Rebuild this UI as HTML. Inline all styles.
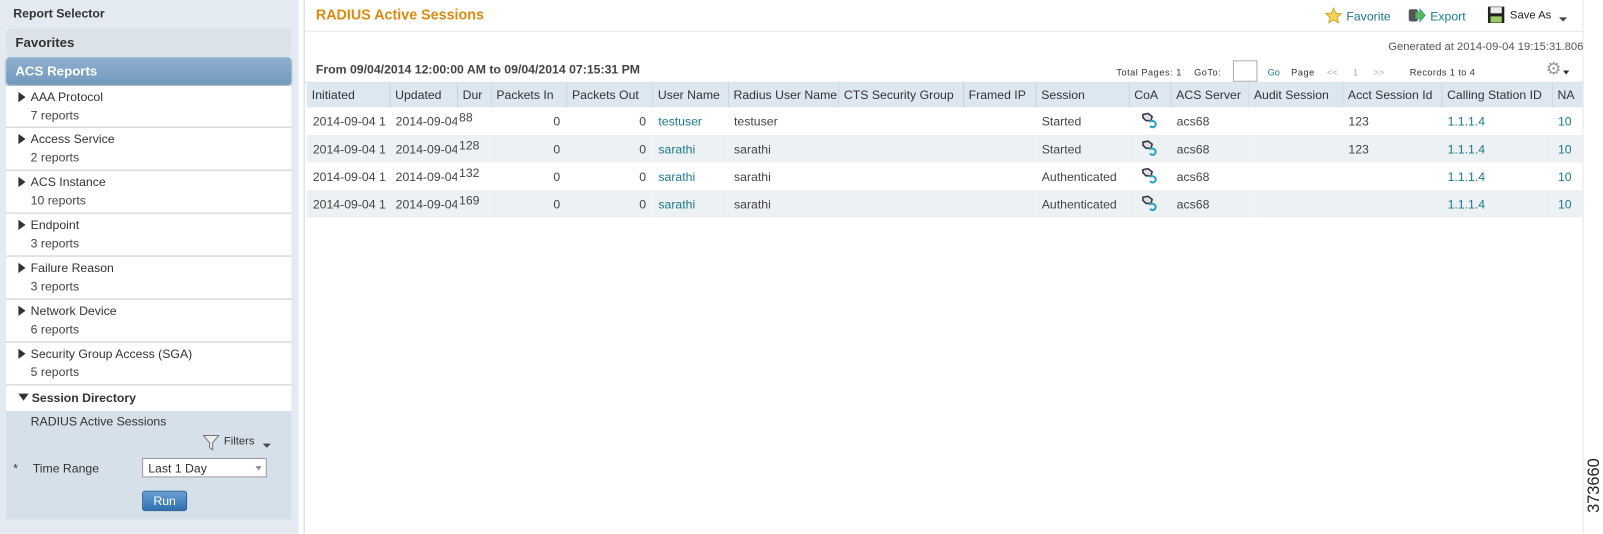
<!DOCTYPE html>
<html><head><meta charset="utf-8"><style>
*{margin:0;padding:0;box-sizing:border-box}
body{width:1603px;height:522px;background:#fff;font-family:"Liberation Sans",sans-serif;font-size:12px;color:#333;position:relative;overflow:hidden}
#wrap{position:absolute;left:0;top:0;width:1568px;height:511px;transform:scale(1.0223);transform-origin:0 0}
.a{position:absolute;white-space:nowrap}
#left{position:absolute;left:0;top:0;width:292px;height:522px;background:#e3eaf1}
.item{position:absolute;left:6px;width:279px;height:42px;background:#fff;border-bottom:1px solid #c8c8c8}
.item .t{position:absolute;left:12px;top:4px;font-size:12px;color:#333}
.item .s{position:absolute;left:24px;top:22px;font-size:12px;color:#444}
.tri{display:inline-block;width:0;height:0;border-left:7px solid #333;border-top:5px solid transparent;border-bottom:5px solid transparent;margin-right:5px;vertical-align:-1px}
table{border-collapse:collapse;position:absolute;left:300px;top:81px;width:1248px;table-layout:fixed}
th{background:#dde7f1;font-weight:normal;text-align:left;height:24px;padding:0 5px;border-right:1px solid #c5d2de;font-size:12px;color:#333;overflow:hidden;white-space:nowrap}
td{height:27px;padding:0 6px;font-size:12px;color:#444;overflow:hidden;white-space:nowrap}
td.u{padding:0 0 0 6px;text-overflow:clip}
tr.g td{background:#eef1f4}
.l{color:#1a7a8a}
.r{text-align:right}
</style></head><body><div id="wrap">
<div id="left">
 <div class="a" style="left:13px;top:6px;font-size:12px;font-weight:bold;color:#333">Report Selector</div>
 <div class="a" style="left:6px;top:28px;width:279px;height:27px;background:#dbe2e8;border-radius:4px"></div>
 <div class="a" style="left:15px;top:34px;font-size:13px;font-weight:bold;color:#333">Favorites</div>
 <div class="a" style="left:6px;top:56px;width:279px;height:27px;background:linear-gradient(#8fb0cf,#7199bd);border-radius:4px;box-shadow:0 1px 2px #89a"></div>
 <div class="a" style="left:15px;top:62px;font-size:13px;font-weight:bold;color:#fff">ACS Reports</div>
 <div class="item" style="top:84px;height:41px"><div class="t"><span class="tri"></span>AAA Protocol</div><div class="s">7 reports</div></div>
 <div class="item" style="top:125px"><div class="t"><span class="tri"></span>Access Service</div><div class="s">2 reports</div></div>
 <div class="item" style="top:167px"><div class="t"><span class="tri"></span>ACS Instance</div><div class="s">10 reports</div></div>
 <div class="item" style="top:209px"><div class="t"><span class="tri"></span>Endpoint</div><div class="s">3 reports</div></div>
 <div class="item" style="top:251px"><div class="t"><span class="tri"></span>Failure Reason</div><div class="s">3 reports</div></div>
 <div class="item" style="top:293px"><div class="t"><span class="tri"></span>Network Device</div><div class="s">6 reports</div></div>
 <div class="item" style="top:335px"><div class="t"><span class="tri"></span>Security Group Access (SGA)</div><div class="s">5 reports</div></div>
 <div class="a" style="left:6px;top:377px;width:279px;height:25px;background:#fff"></div>
 <div class="a" style="left:18px;top:382px;font-weight:bold;color:#333"><span style="display:inline-block;border-top:7px solid #333;border-left:5px solid transparent;border-right:5px solid transparent;margin-right:3px;vertical-align:1px"></span>Session Directory</div>
 <div class="a" style="left:6px;top:402px;width:279px;height:106px;background:#d6e0ea"></div>
 <div class="a" style="left:30px;top:405px;color:#333">RADIUS Active Sessions</div>
 <svg class="a" style="left:198px;top:424px" width="18" height="18" viewBox="0 0 18 18"><path d="M1 2h15l-6 7v7l-3-2V9z" fill="#eee" stroke="#777"/></svg>
 <div class="a" style="left:219px;top:426px;font-size:11px;color:#333">Filters</div>
 <div class="a" style="left:257px;top:434px;border-top:4px solid #444;border-left:4px solid transparent;border-right:4px solid transparent"></div>
 <div class="a" style="left:13px;top:451px;color:#333">*</div>
 <div class="a" style="left:32px;top:451px;color:#333">Time Range</div>
 <div class="a" style="left:139px;top:448px;width:122px;height:19px;background:#fff;border:1px solid #999;padding:2px 5px;color:#333">Last 1 Day</div>
 <div class="a" style="left:250px;top:456px;border-top:4px solid #888;border-left:3px solid transparent;border-right:3px solid transparent"></div>
 <div class="a" style="left:139px;top:480px;width:44px;height:20px;background:linear-gradient(#6aa0d4,#2f6fae);border:1px solid #2a5f95;border-radius:3px;color:#fff;text-align:center;line-height:18px">Run</div>
</div>
<div class="a" style="left:297px;top:0;width:1px;height:522px;background:#d0d6dc"></div>
<div class="a" style="left:1548px;top:0;width:1px;height:522px;background:#e6e6e6"></div>
<div class="a" style="left:309px;top:6px;font-size:14px;font-weight:bold;color:#d98a12">RADIUS Active Sessions</div>
<div class="a" style="left:298px;top:30px;width:1250px;height:1px;background:#e4e4e4"></div>
<svg class="a" style="left:1296px;top:7px" width="17" height="17" viewBox="0 0 20 20"><path d="M10 1l2.6 6 6.4.5-5 4.2 1.6 6.3L10 14.6 4.4 18l1.6-6.3-5-4.2 6.4-.5z" fill="#f5d65a" stroke="#c9a01e"/></svg>
<div class="a l" style="left:1317px;top:9px;color:#1a7a8a">Favorite</div>
<svg class="a" style="left:1377px;top:7px" width="18" height="16" viewBox="0 0 18 16"><rect x="1" y="2" width="9" height="12" rx="2" fill="#555"/><path d="M8 5h4V2l5 6-5 6v-3H8z" fill="#5cb85c" stroke="#3a7"/></svg>
<div class="a l" style="left:1399px;top:9px;color:#1a7a8a">Export</div>
<svg class="a" style="left:1455px;top:6px" width="17" height="17" viewBox="0 0 17 17"><rect x="0.5" y="0.5" width="16" height="16" fill="#222"/><rect x="3" y="1" width="11" height="6" fill="#eee"/><rect x="3" y="10" width="11" height="6" fill="#9c6"/></svg>
<div class="a" style="left:1477px;top:9px;font-size:11px;color:#222">Save As</div>
<div class="a" style="left:1525px;top:17px;border-top:4px solid #444;border-left:4px solid transparent;border-right:4px solid transparent"></div>
<div class="a" style="left:1358px;top:40px;font-size:11px;color:#555">Generated at 2014-09-04 19:15:31.806</div>
<div class="a" style="left:309px;top:61px;font-weight:bold;color:#444">From 09/04/2014 12:00:00 AM to 09/04/2014 07:15:31 PM</div>
<div class="a" style="left:1092px;top:66px;font-size:9px;color:#333;letter-spacing:.5px">Total Pages: 1&nbsp;&nbsp;&nbsp;&nbsp;GoTo:</div>
<div class="a" style="left:1206px;top:59px;width:24px;height:21px;border:1px solid #aaa;background:#fff"></div>
<div class="a" style="left:1240px;top:66px;font-size:9px;color:#1a7a8a">Go</div>
<div class="a" style="left:1263px;top:66px;font-size:9px;color:#333;letter-spacing:.5px">Page</div>
<div class="a" style="left:1298px;top:66px;font-size:9px;color:#aaa">&lt;&lt;&nbsp;&nbsp;&nbsp;&nbsp;&nbsp;&nbsp;1&nbsp;&nbsp;&nbsp;&nbsp;&nbsp;&nbsp;&gt;&gt;</div>
<div class="a" style="left:1379px;top:66px;font-size:9px;color:#333;letter-spacing:.4px">Records 1 to 4</div>
<div class="a" style="left:1512px;top:59px;font-size:17px;color:#999;line-height:18px">⚙</div>
<div class="a" style="left:1529px;top:69px;border-top:4px solid #333;border-left:3px solid transparent;border-right:3px solid transparent"></div>
<div class="a" style="left:298px;top:80px;width:1250px;height:1px;background:#ddd"></div>
<table>
<colgroup><col style="width:81px"><col style="width:66px"><col style="width:33px"><col style="width:74px"><col style="width:84px"><col style="width:74px"><col style="width:108px"><col style="width:122px"><col style="width:71px"><col style="width:91px"><col style="width:41px"><col style="width:76px"><col style="width:92px"><col style="width:97px"><col style="width:108px"><col style="width:30px"></colgroup>
<tr><th>Initiated</th><th>Updated</th><th>Dur</th><th>Packets In</th><th>Packets Out</th><th>User Name</th><th>Radius User Name</th><th>CTS Security Group</th><th>Framed IP</th><th>Session</th><th>CoA</th><th>ACS Server</th><th>Audit Session</th><th>Acct Session Id</th><th>Calling Station ID</th><th style="border:none">NA</th></tr>
<tr><td>2014-09-04 1</td><td class="u">2014-09-04</td><td style="vertical-align:top;padding:3px 2px">88</td><td class="r">0</td><td class="r">0</td><td class="l">testuser</td><td>testuser</td><td></td><td></td><td>Started</td><td></td><td>acs68</td><td></td><td>123</td><td class="l">1.1.1.4</td><td class="l">10</td></tr>
<tr class="g"><td>2014-09-04 1</td><td class="u">2014-09-04</td><td style="vertical-align:top;padding:3px 2px">128</td><td class="r">0</td><td class="r">0</td><td class="l">sarathi</td><td>sarathi</td><td></td><td></td><td>Started</td><td></td><td>acs68</td><td></td><td>123</td><td class="l">1.1.1.4</td><td class="l">10</td></tr>
<tr><td>2014-09-04 1</td><td class="u">2014-09-04</td><td style="vertical-align:top;padding:3px 2px">132</td><td class="r">0</td><td class="r">0</td><td class="l">sarathi</td><td>sarathi</td><td></td><td></td><td>Authenticated</td><td></td><td>acs68</td><td></td><td></td><td class="l">1.1.1.4</td><td class="l">10</td></tr>
<tr class="g"><td>2014-09-04 1</td><td class="u">2014-09-04</td><td style="vertical-align:top;padding:3px 2px">169</td><td class="r">0</td><td class="r">0</td><td class="l">sarathi</td><td>sarathi</td><td></td><td></td><td>Authenticated</td><td></td><td>acs68</td><td></td><td></td><td class="l">1.1.1.4</td><td class="l">10</td></tr>
</table>
<svg class="a" style="left:1116px;top:109px" width="18" height="18" viewBox="0 0 18 18"><path d="M2 3l5-1 4 3-1 4-5 0-3-3z" fill="#dde" stroke="#333" stroke-width="1.5"/><path d="M8 10c4-2 8 1 6 4-1 2-4 2-5 0" fill="none" stroke="#2aa3c8" stroke-width="2"/></svg>
<svg class="a" style="left:1116px;top:136px" width="18" height="18" viewBox="0 0 18 18"><path d="M2 3l5-1 4 3-1 4-5 0-3-3z" fill="#dde" stroke="#333" stroke-width="1.5"/><path d="M8 10c4-2 8 1 6 4-1 2-4 2-5 0" fill="none" stroke="#2aa3c8" stroke-width="2"/></svg>
<svg class="a" style="left:1116px;top:163px" width="18" height="18" viewBox="0 0 18 18"><path d="M2 3l5-1 4 3-1 4-5 0-3-3z" fill="#dde" stroke="#333" stroke-width="1.5"/><path d="M8 10c4-2 8 1 6 4-1 2-4 2-5 0" fill="none" stroke="#2aa3c8" stroke-width="2"/></svg>
<svg class="a" style="left:1116px;top:190px" width="18" height="18" viewBox="0 0 18 18"><path d="M2 3l5-1 4 3-1 4-5 0-3-3z" fill="#dde" stroke="#333" stroke-width="1.5"/><path d="M8 10c4-2 8 1 6 4-1 2-4 2-5 0" fill="none" stroke="#2aa3c8" stroke-width="2"/></svg>
<div class="a" style="left:1525px;top:466px;transform:rotate(-90deg);transform-origin:center;font-size:16px;color:#222;width:70px;text-align:center">373660</div>
</div></body></html>
